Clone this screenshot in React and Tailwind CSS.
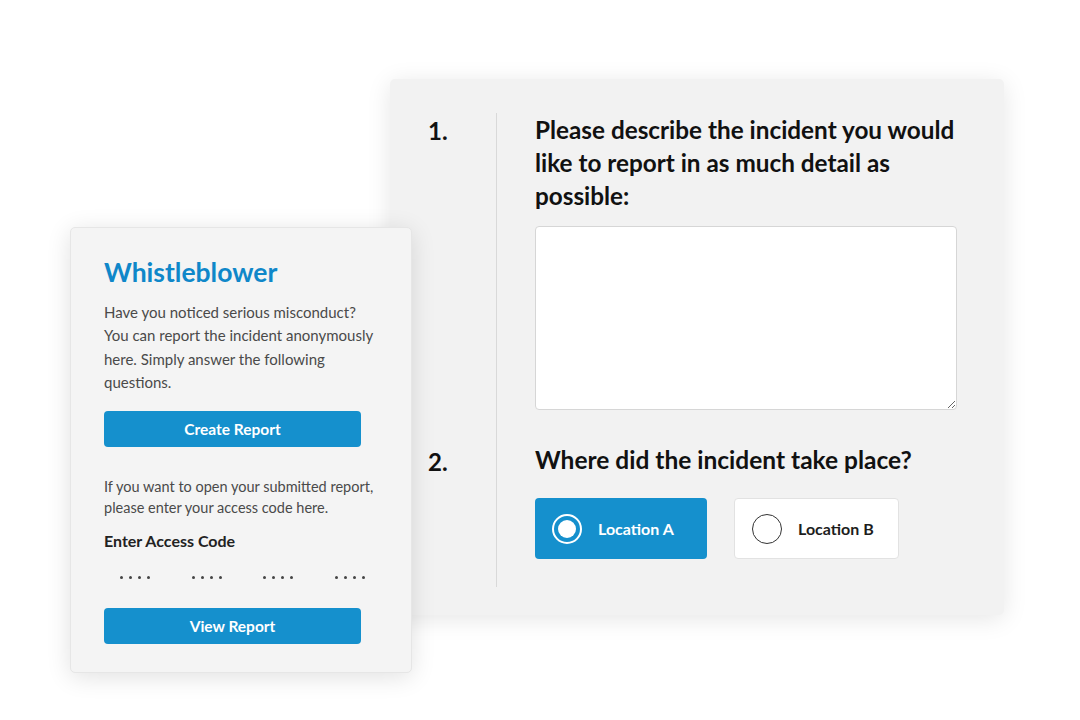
import { useState } from 'react'

function Dots() {
  return (
    <div className="flex items-center justify-between pl-[16px] pr-[13px] pt-[24px]">
      {[0, 1, 2, 3].map((g) => (
        <div key={g} className="flex gap-[6px]">
          {[0, 1, 2, 3].map((d) => (
            <span key={d} className="h-[3px] w-[3px] rounded-full bg-[#444]" />
          ))}
        </div>
      ))}
    </div>
  )
}

function Radio({ label, checked, onClick }) {
  return (
    <button
      type="button"
      onClick={onClick}
      className={`flex h-[61px] items-center gap-[16px] whitespace-nowrap rounded-[4px] pl-[17px] text-[16px] font-bold ${
        checked
          ? 'w-[172px] bg-[#1590cd] text-white'
          : 'w-[165px] border border-[#e2e2e2] bg-white text-[#1d1d1d]'
      }`}
    >
      {checked ? (
        <span className="flex h-[30px] w-[30px] shrink-0 items-center justify-center rounded-full border-2 border-white">
          <span className="h-[18px] w-[18px] rounded-full bg-white" />
        </span>
      ) : (
        <span className="h-[30px] w-[30px] shrink-0 rounded-full border-[1.5px] border-[#333]" />
      )}
      {label}
    </button>
  )
}

export default function App() {
  const [location, setLocation] = useState('A')

  return (
    <div className="relative h-[720px] w-[1080px] overflow-hidden bg-white font-['Lato',sans-serif]">
      {/* form window */}
      <div className="absolute left-[390px] top-[79px] h-[536px] w-[614px] rounded-[5px] bg-[#f2f2f2] shadow-[0_4px_24px_rgba(0,0,0,0.10)]">
        <div className="flex pt-[34px]">
          <div className="flex h-[474px] w-[107px] flex-col border-r border-[#d9d9d9] pl-[38px] text-[24px] font-bold text-[#111]">
            <div className="leading-[36px]">1.</div>
            <div className="mt-[295px] leading-[36px]">2.</div>
          </div>
          <div className="flex-1 pl-[38px] pr-[36px]">
            <h2 className="text-[24.3px] font-bold leading-[33px] text-[#111]">
              Please describe the incident you would like to report in as much detail as possible:
            </h2>
            <textarea className="mt-[14px] block h-[184px] w-[422px] rounded-[4px] border border-[#d6d6d6] bg-white outline-none" />
            <h2 className="mt-[32px] text-[24.5px] font-bold leading-[36px] text-[#111]">
              Where did the incident take place?
            </h2>
            <div className="mt-[20px] flex gap-[27px]">
              <Radio label="Location A" checked={location === 'A'} onClick={() => setLocation('A')} />
              <Radio label="Location B" checked={location === 'B'} onClick={() => setLocation('B')} />
            </div>
          </div>
        </div>
      </div>

      {/* side panel */}
      <div className="absolute left-[70px] top-[227px] h-[446px] w-[342px] rounded-[5px] border border-[#e6e6e6] bg-[#f4f4f4] px-[33px] pt-[28px] shadow-[0_4px_24px_rgba(0,0,0,0.12)]">
        <h1 className="text-[26.5px] font-bold leading-[32px] text-[#0f87c9]">Whistleblower</h1>
        <p className="mt-[13px] w-[272px] text-[15px] leading-[23.3px] text-[#4a4a4a]">
          Have you noticed serious misconduct? You can report the incident anonymously here. Simply answer the following questions.
        </p>
        <button
          type="button"
          className="mt-[17px] h-[36px] w-[257px] rounded-[4px] bg-[#1590cd] text-[15.5px] font-bold text-white"
        >
          Create Report
        </button>
        <p className="mt-[29px] text-[14.5px] leading-[21px] text-[#4a4a4a]">
          If you want to open your submitted report, please enter your access code here.
        </p>
        <div className="mt-[12px] text-[16px] font-bold leading-[22px] text-[#222]">Enter Access Code</div>
        <Dots />
        <button
          type="button"
          className="mt-[29px] h-[36px] w-[257px] rounded-[4px] bg-[#1590cd] text-[15.5px] font-bold text-white"
        >
          View Report
        </button>
      </div>
    </div>
  )
}
